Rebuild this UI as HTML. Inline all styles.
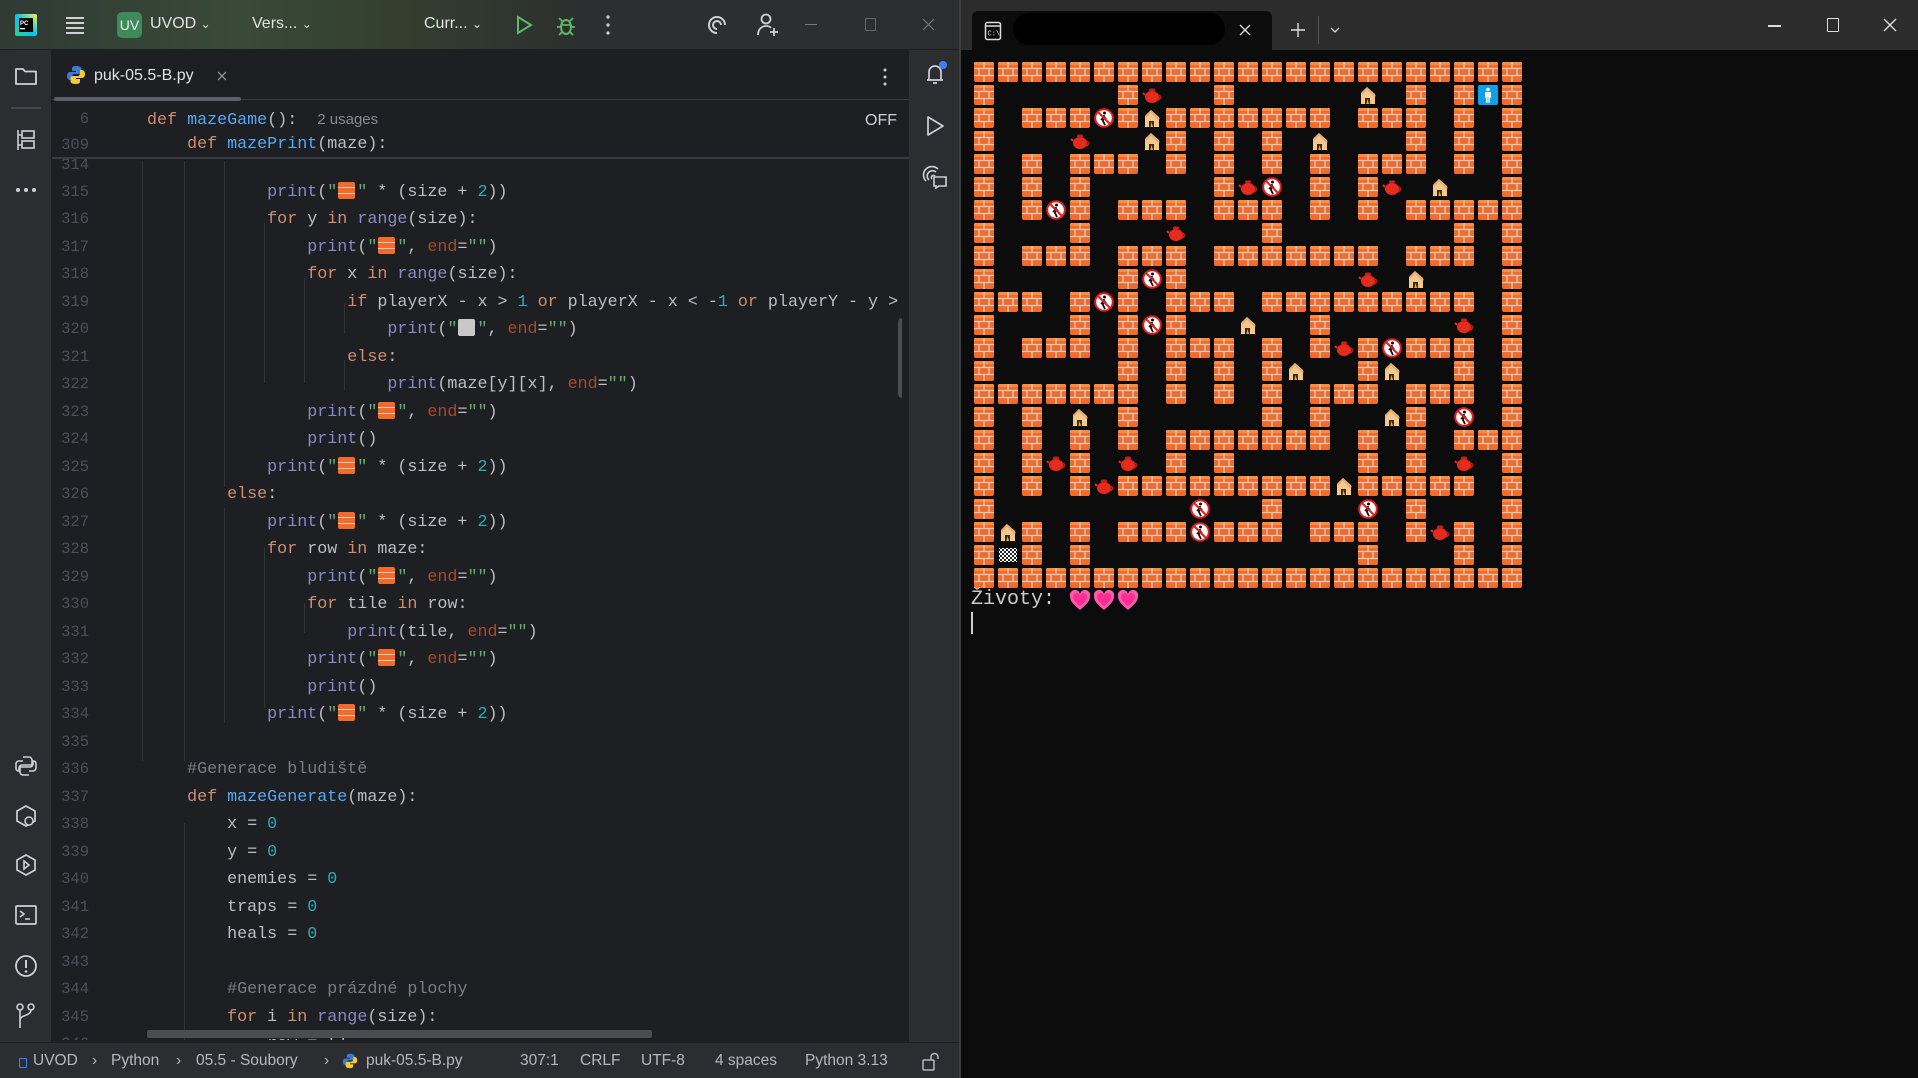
<!DOCTYPE html>
<html><head><meta charset="utf-8">
<style>
*{margin:0;padding:0;box-sizing:border-box}
body{width:1918px;height:1078px;overflow:hidden;background:#0c0c0c;position:relative;font-family:"Liberation Sans",sans-serif}
.abs{position:absolute}
#ide{left:0;top:0;width:960px;height:1078px;background:#1e1f22;overflow:hidden}
#title{left:0;top:0;width:960px;height:50px;background:linear-gradient(90deg,#2f3a33 0%,#3a4a38 25%,#34402f 40%,#2c2f2f 60%,#2b2d30 100%);border-bottom:1px solid #1e1f22}
.tt{color:#dfe1e5;font-size:16px;position:absolute;top:15px}
#lstrip{left:0;top:50px;width:52px;height:992px;background:#2b2d30;border-right:1px solid #1e1f22}
#rstrip{left:909px;top:50px;width:51px;height:992px;background:#2b2d30}
#status{left:0;top:1042px;width:960px;height:36px;background:#2b2d30;border-top:1px solid #1e1f22}
.st{position:absolute;top:9px;color:#b4b8bf;font-size:15.5px}
.code{font-family:"Liberation Mono",monospace;font-size:16.7px;color:#bcbec4;white-space:pre}
.ln{position:absolute;left:52px;width:37px;text-align:right;color:#4b5059;font-family:"Liberation Mono",monospace;font-size:15.5px}
.row{position:absolute;left:147px;height:27.5px;line-height:27.5px}
.k{color:#cf8e6d}.f{color:#56a8f5}.b{color:#8888c6}.n{color:#2aacb8}.s{color:#6aab73}.p{color:#aa4926}.c{color:#7a7e85}
.em{display:inline-block;width:20px;height:17px;vertical-align:-3px;position:relative}
.em i{position:absolute;left:1px;top:0;width:17px;height:17px;border-radius:2px;background:#f26b2a;
background-image:linear-gradient(#f26b2a 0 5px,#d8cfc8 5px 6px,#f26b2a 6px 11px,#d8cfc8 11px 12px,#f26b2a 12px)}
.em.g i{background:#c8c8c8;background-image:none}
.guide{position:absolute;width:1px;background:#313438}
</style></head><body>
<div id="ide" class="abs">
 <div id="title" class="abs">
  <svg class="abs" style="left:14px;top:13px" width="24" height="24" viewBox="0 0 24 24"><defs><linearGradient id="pg" x1="0" y1="1" x2="1" y2="0"><stop offset="0" stop-color="#21d789"/><stop offset=".5" stop-color="#07c3f2"/><stop offset="1" stop-color="#fcf84a"/></linearGradient></defs><rect x="1" y="1" width="22" height="22" fill="url(#pg)" rx="2"/><rect x="5" y="5" width="14" height="14" fill="#000"/><text x="6" y="12" font-size="6" fill="#fff" font-family="Liberation Sans" font-weight="bold">PC</text><rect x="6" y="15" width="5" height="1.3" fill="#fff"/></svg>
  <svg class="abs" style="left:64px;top:14px" width="22" height="22"><path d="M2 4h18M2 9h18M2 14h18M2 19h18" stroke="#ced0d6" stroke-width="2"/></svg>
  <div class="abs" style="left:117px;top:12px;width:25px;height:26px;border-radius:5px;background:#3e8a5a;color:#e8f0e8;font-size:14px;line-height:26px;text-align:center">UV</div>
  <div class="tt" style="left:150px">UVOD <span style="font-size:12px">&#8964;</span></div>
  <div class="tt" style="left:252px">Vers... <span style="font-size:12px">&#8964;</span></div>
  <div class="tt" style="left:424px">Curr... <span style="font-size:12px">&#8964;</span></div>
  <svg class="abs" style="left:513px;top:14px" width="22" height="22"><path d="M5 3l13 8-13 8z" fill="none" stroke="#5fb865" stroke-width="2"/></svg>
  <svg class="abs" style="left:555px;top:13px" width="22" height="24"><ellipse cx="11" cy="14" rx="5" ry="7" fill="none" stroke="#5fb865" stroke-width="2"/><path d="M6 14H2M16 14h4M7 8L4 5M15 8l3-3M7 19l-3 3M15 19l3 3M6 12h10" stroke="#5fb865" stroke-width="1.8"/></svg>
  <svg class="abs" style="left:604px;top:14px" width="8" height="22"><circle cx="4" cy="3" r="1.6" fill="#ced0d6"/><circle cx="4" cy="11" r="1.6" fill="#ced0d6"/><circle cx="4" cy="19" r="1.6" fill="#ced0d6"/></svg>
  <svg class="abs" style="left:705px;top:13px" width="24" height="24"><path d="M12 20a8 8 0 1 1 8-8M12 16a4 4 0 1 1 4-4M12 12" fill="none" stroke="#ced0d6" stroke-width="2"/></svg>
  <svg class="abs" style="left:755px;top:12px" width="26" height="26"><circle cx="11" cy="7" r="4.5" fill="none" stroke="#ced0d6" stroke-width="1.8"/><path d="M3 23c0-6 4-9 8-9 2 0 4 .5 5 2M19 16v8M15 20h8" fill="none" stroke="#ced0d6" stroke-width="1.8"/></svg>
  <div class="abs" style="left:805px;top:24px;width:12px;height:1px;background:#777"></div>
  <div class="abs" style="left:865px;top:18px;width:11px;height:13px;border:1px solid #666"></div>
  <svg class="abs" style="left:922px;top:18px" width="13" height="13"><path d="M1 1l11 11M12 1L1 12" stroke="#777" stroke-width="1.2"/></svg>
 </div>
 <div id="lstrip" class="abs">
  <svg class="abs" style="left:14px;top:16px" width="24" height="20"><path d="M2 3h7l2 2.5h11V18H2z" fill="none" stroke="#ced0d6" stroke-width="1.8" stroke-linejoin="round"/></svg>
  <div class="abs" style="left:11px;top:57px;width:30px;height:2px;background:#43454a"></div>
  <svg class="abs" style="left:15px;top:78px" width="22" height="24"><path d="M3 2v20M3 7h4M3 17h4" stroke="#ced0d6" stroke-width="1.6" fill="none"/><rect x="7" y="3" width="12" height="7" fill="none" stroke="#ced0d6" stroke-width="1.6"/><rect x="7" y="13" width="12" height="7" fill="none" stroke="#ced0d6" stroke-width="1.6"/></svg>
  <svg class="abs" style="left:15px;top:136px" width="24" height="8"><circle cx="3" cy="4" r="2" fill="#ced0d6"/><circle cx="11" cy="4" r="2" fill="#ced0d6"/><circle cx="19" cy="4" r="2" fill="#ced0d6"/></svg>
  <svg class="abs" style="left:14px;top:704px" width="24" height="24"><path d="M9 3h6a3 3 0 0 1 3 3v5H8a3 3 0 0 0-3 3v3H4a3 3 0 0 1-2-3V10a3 3 0 0 1 3-3h4M15 21H9a3 3 0 0 1-3-3v-5h10a3 3 0 0 0 3-3V7h1a3 3 0 0 1 2 3v4a3 3 0 0 1-3 3h-4" fill="none" stroke="#ced0d6" stroke-width="1.6"/></svg>
  <svg class="abs" style="left:14px;top:754px" width="24" height="26"><path d="M12 2l9 5v10l-9 5-9-5V7z" fill="none" stroke="#ced0d6" stroke-width="1.7"/><circle cx="15" cy="17" r="4" fill="#2b2d30" stroke="#ced0d6" stroke-width="1.5"/></svg>
  <svg class="abs" style="left:14px;top:803px" width="24" height="26"><path d="M12 2l9 5v10l-9 5-9-5V7z" fill="none" stroke="#ced0d6" stroke-width="1.7"/><path d="M10 8l5 4-5 4z" fill="none" stroke="#ced0d6" stroke-width="1.6"/></svg>
  <svg class="abs" style="left:14px;top:853px" width="24" height="24"><rect x="2" y="3" width="20" height="18" rx="1" fill="none" stroke="#ced0d6" stroke-width="1.7"/><path d="M6 8l4 3-4 3M11 16h5" fill="none" stroke="#ced0d6" stroke-width="1.6"/></svg>
  <svg class="abs" style="left:13px;top:903px" width="26" height="26"><circle cx="13" cy="13" r="10" fill="none" stroke="#ced0d6" stroke-width="1.8"/><path d="M13 7v8" stroke="#ced0d6" stroke-width="2"/><circle cx="13" cy="18.5" r="1.3" fill="#ced0d6"/></svg>
  <svg class="abs" style="left:14px;top:952px" width="24" height="28"><circle cx="6" cy="5" r="3" fill="none" stroke="#ced0d6" stroke-width="1.6"/><circle cx="17" cy="5" r="3" fill="none" stroke="#ced0d6" stroke-width="1.6"/><path d="M6 8v18M17 8c0 6-11 5-11 10" fill="none" stroke="#ced0d6" stroke-width="1.6"/></svg>
 </div>
 <div id="rstrip" class="abs">
  <svg class="abs" style="left:14px;top:10px" width="26" height="28"><path d="M4 20h16M6 20v-8a6 6 0 0 1 12 0v8M10 23h4" fill="none" stroke="#ced0d6" stroke-width="1.7"/><circle cx="20" cy="5" r="4" fill="#3d82f5"/></svg>
  <svg class="abs" style="left:15px;top:64px" width="22" height="24"><path d="M4 3l15 9-15 9z" fill="none" stroke="#ced0d6" stroke-width="1.7" stroke-linejoin="round"/></svg>
  <svg class="abs" style="left:13px;top:115px" width="26" height="24"><path d="M4 16a8 8 0 0 1 12-12M7 15a5 5 0 0 1 7-8M10 14a2 2 0 0 1 3-3" fill="none" stroke="#ced0d6" stroke-width="1.6"/><path d="M12 12h12v9h-7l-3 2v-2h-2z" fill="#2b2d30" stroke="#ced0d6" stroke-width="1.6"/></svg>
 </div>
 <!-- tab bar -->
 <svg class="abs" style="left:66px;top:65px" width="20" height="20" viewBox="0 0 20 20"><path d="M10 1c-4 0-4 2-4 3v2h4v1H4c-2 0-3 2-3 4s1 4 3 4h2v-3c0-2 1-3 3-3h4c1.5 0 2.5-1 2.5-2.5V4c0-2-2-3-5.5-3z" fill="#3d7ad6"/><path d="M10 19c4 0 4-2 4-3v-2h-4v-1h6c2 0 3-2 3-4s-1-4-3-4h-2v3c0 2-1 3-3 3H7c-1.5 0-2.5 1-2.5 2.5V16c0 2 2 3 5.5 3z" fill="#f5c83a"/></svg>
 <div class="abs" style="left:94px;top:67px;color:#dfe1e5;font-size:16px">puk-05.5-B.py</div>
 <svg class="abs" style="left:217px;top:71px" width="10" height="10"><path d="M1 1l8 8M9 1L1 9" stroke="#8c8f94" stroke-width="1.3"/></svg>
 <svg class="abs" style="left:882px;top:68px" width="6" height="18"><circle cx="3" cy="2" r="1.5" fill="#ced0d6"/><circle cx="3" cy="9" r="1.5" fill="#ced0d6"/><circle cx="3" cy="16" r="1.5" fill="#ced0d6"/></svg>
 <div class="abs" style="left:52px;top:99px;width:857px;height:1px;background:#393b40"></div>
 <div class="abs" style="left:54px;top:97px;width:187px;height:4px;border-radius:2px;background:#5d6067"></div>

 <!-- code -->
 <div class="abs" style="left:52px;top:158px;width:850px;height:882px;overflow:hidden">
  <div style="position:absolute;left:-52px;top:-155.5px;width:960px;height:1100px">
   <div class="guide" style="left:142px;top:158px;height:600px"></div>
   <div class="guide" style="left:184px;top:158px;height:600px"></div>
   <div class="guide" style="left:224px;top:158px;height:326px"></div>
   <div class="guide" style="left:224px;top:505px;height:215px"></div>
   <div class="guide" style="left:264px;top:220px;height:160px"></div>
   <div class="guide" style="left:304px;top:275px;height:105px"></div>
   <div class="guide" style="left:344px;top:300px;height:30px"></div>
   <div class="guide" style="left:344px;top:357px;height:30px"></div>
   <div class="guide" style="left:264px;top:545px;height:160px"></div>
   <div class="guide" style="left:304px;top:600px;height:30px"></div>
   <div class="guide" style="left:184px;top:820px;height:230px"></div>
   <div class="code">
<div class="ln" style="top:149px;line-height:27.5px">314</div>
<div class="ln" style="top:176px;line-height:27.5px">315</div><div class="row" style="top:176px">            <span class="b">print</span>(<span class="s">"<span class="em"><i></i></span>"</span> * (size + <span class="n">2</span>))</div>
<div class="ln" style="top:203.5px;line-height:27.5px">316</div><div class="row" style="top:203.5px">            <span class="k">for</span> y <span class="k">in</span> <span class="b">range</span>(size):</div>
<div class="ln" style="top:231px;line-height:27.5px">317</div><div class="row" style="top:231px">                <span class="b">print</span>(<span class="s">"<span class="em"><i></i></span>"</span>, <span class="p">end</span>=<span class="s">""</span>)</div>
<div class="ln" style="top:258.5px;line-height:27.5px">318</div><div class="row" style="top:258.5px">                <span class="k">for</span> x <span class="k">in</span> <span class="b">range</span>(size):</div>
<div class="ln" style="top:286px;line-height:27.5px">319</div><div class="row" style="top:286px">                    <span class="k">if</span> playerX - x &gt; <span class="n">1</span> <span class="k">or</span> playerX - x &lt; -<span class="n">1</span> <span class="k">or</span> playerY - y &gt; <span class="n">1</span></div>
<div class="ln" style="top:313.5px;line-height:27.5px">320</div><div class="row" style="top:313.5px">                        <span class="b">print</span>(<span class="s">"<span class="em g"><i></i></span>"</span>, <span class="p">end</span>=<span class="s">""</span>)</div>
<div class="ln" style="top:341px;line-height:27.5px">321</div><div class="row" style="top:341px">                    <span class="k">else</span>:</div>
<div class="ln" style="top:368.5px;line-height:27.5px">322</div><div class="row" style="top:368.5px">                        <span class="b">print</span>(maze[y][x], <span class="p">end</span>=<span class="s">""</span>)</div>
<div class="ln" style="top:396px;line-height:27.5px">323</div><div class="row" style="top:396px">                <span class="b">print</span>(<span class="s">"<span class="em"><i></i></span>"</span>, <span class="p">end</span>=<span class="s">""</span>)</div>
<div class="ln" style="top:423.5px;line-height:27.5px">324</div><div class="row" style="top:423.5px">                <span class="b">print</span>()</div>
<div class="ln" style="top:451px;line-height:27.5px">325</div><div class="row" style="top:451px">            <span class="b">print</span>(<span class="s">"<span class="em"><i></i></span>"</span> * (size + <span class="n">2</span>))</div>
<div class="ln" style="top:478.5px;line-height:27.5px">326</div><div class="row" style="top:478.5px">        <span class="k">else</span>:</div>
<div class="ln" style="top:506px;line-height:27.5px">327</div><div class="row" style="top:506px">            <span class="b">print</span>(<span class="s">"<span class="em"><i></i></span>"</span> * (size + <span class="n">2</span>))</div>
<div class="ln" style="top:533.5px;line-height:27.5px">328</div><div class="row" style="top:533.5px">            <span class="k">for</span> row <span class="k">in</span> maze:</div>
<div class="ln" style="top:561px;line-height:27.5px">329</div><div class="row" style="top:561px">                <span class="b">print</span>(<span class="s">"<span class="em"><i></i></span>"</span>, <span class="p">end</span>=<span class="s">""</span>)</div>
<div class="ln" style="top:588.5px;line-height:27.5px">330</div><div class="row" style="top:588.5px">                <span class="k">for</span> tile <span class="k">in</span> row:</div>
<div class="ln" style="top:616px;line-height:27.5px">331</div><div class="row" style="top:616px">                    <span class="b">print</span>(tile, <span class="p">end</span>=<span class="s">""</span>)</div>
<div class="ln" style="top:643.5px;line-height:27.5px">332</div><div class="row" style="top:643.5px">                <span class="b">print</span>(<span class="s">"<span class="em"><i></i></span>"</span>, <span class="p">end</span>=<span class="s">""</span>)</div>
<div class="ln" style="top:671px;line-height:27.5px">333</div><div class="row" style="top:671px">                <span class="b">print</span>()</div>
<div class="ln" style="top:698.5px;line-height:27.5px">334</div><div class="row" style="top:698.5px">            <span class="b">print</span>(<span class="s">"<span class="em"><i></i></span>"</span> * (size + <span class="n">2</span>))</div>
<div class="ln" style="top:726px;line-height:27.5px">335</div>
<div class="ln" style="top:753.5px;line-height:27.5px">336</div><div class="row" style="top:753.5px">    <span class="c">#Generace bludiště</span></div>
<div class="ln" style="top:781px;line-height:27.5px">337</div><div class="row" style="top:781px">    <span class="k">def</span> <span class="f">mazeGenerate</span>(maze):</div>
<div class="ln" style="top:808.5px;line-height:27.5px">338</div><div class="row" style="top:808.5px">        x = <span class="n">0</span></div>
<div class="ln" style="top:836px;line-height:27.5px">339</div><div class="row" style="top:836px">        y = <span class="n">0</span></div>
<div class="ln" style="top:863.5px;line-height:27.5px">340</div><div class="row" style="top:863.5px">        enemies = <span class="n">0</span></div>
<div class="ln" style="top:891px;line-height:27.5px">341</div><div class="row" style="top:891px">        traps = <span class="n">0</span></div>
<div class="ln" style="top:918.5px;line-height:27.5px">342</div><div class="row" style="top:918.5px">        heals = <span class="n">0</span></div>
<div class="ln" style="top:946px;line-height:27.5px">343</div>
<div class="ln" style="top:973.5px;line-height:27.5px">344</div><div class="row" style="top:973.5px">        <span class="c">#Generace prázdné plochy</span></div>
<div class="ln" style="top:1001px;line-height:27.5px">345</div><div class="row" style="top:1001px">        <span class="k">for</span> i <span class="k">in</span> <span class="b">range</span>(size):</div>
<div class="ln" style="top:1028.5px;line-height:27.5px">346</div><div class="row" style="top:1028.5px">            row = []</div>
   </div>
  </div>
  <div class="abs" style="left:846px;top:160px;width:9px;height:80px;border-radius:4px;background:#4a4c50"></div>
  <div class="abs" style="left:95px;top:872px;width:505px;height:8px;border-radius:2px;background:#4a4c50"></div>
 </div>
 <!-- sticky -->
 <div class="abs code" style="left:52px;top:102px;width:857px;height:55px;background:#1e1f22">
  <div class="ln" style="left:0;top:4px;line-height:27px">6</div>
  <div class="row" style="left:95px;top:4px;line-height:27px"><span class="k">def</span> <span class="f">mazeGame</span>():  <span style="font-family:'Liberation Sans',sans-serif;font-size:15px;color:#868a91">2 usages</span></div>
  <div class="ln" style="left:0;top:31px;line-height:24px">309</div>
  <div class="row" style="left:95px;top:31px;line-height:24px;height:24px">    <span class="k">def</span> <span class="f">mazePrint</span>(maze):</div>
  <div class="abs" style="left:813px;top:10px;font-family:'Liberation Sans',sans-serif;font-size:16px;color:#ced0d6">OFF</div>
 </div>
 <div class="abs" style="left:52px;top:157px;width:857px;height:2px;background:#393b40"></div>

 <div id="status" class="abs">
  <div class="abs" style="left:19px;top:15px;width:8px;height:10px;border:1.5px solid #3d82f5;border-radius:1px"></div>
  <div class="st" style="left:33px">UVOD</div>
  <div class="st" style="left:92px">›</div>
  <div class="st" style="left:111px">Python</div>
  <div class="st" style="left:176px">›</div>
  <div class="st" style="left:196px">05.5 - Soubory</div>
  <div class="st" style="left:324px">›</div>
  <svg class="abs" style="left:342px;top:10px" width="16" height="16" viewBox="0 0 20 20"><path d="M10 1c-4 0-4 2-4 3v2h4v1H4c-2 0-3 2-3 4s1 4 3 4h2v-3c0-2 1-3 3-3h4c1.5 0 2.5-1 2.5-2.5V4c0-2-2-3-5.5-3z" fill="#3d7ad6"/><path d="M10 19c4 0 4-2 4-3v-2h-4v-1h6c2 0 3-2 3-4s-1-4-3-4h-2v3c0 2-1 3-3 3H7c-1.5 0-2.5 1-2.5 2.5V16c0 2 2 3 5.5 3z" fill="#f5c83a"/></svg>
  <div class="st" style="left:366px;width:108px;overflow:hidden;white-space:nowrap">puk-05.5-B.py</div>
  <div class="st" style="left:520px">307:1</div>
  <div class="st" style="left:580px">CRLF</div>
  <div class="st" style="left:641px">UTF-8</div>
  <div class="st" style="left:715px">4 spaces</div>
  <div class="st" style="left:805px">Python 3.13</div>
  <svg class="abs" style="left:921px;top:8px" width="18" height="22"><rect x="2" y="9" width="11" height="10" rx="1" fill="none" stroke="#b4b8bf" stroke-width="1.5"/><path d="M10 9V6a3.5 3.5 0 0 1 7 0v2" fill="none" stroke="#b4b8bf" stroke-width="1.5"/></svg>
 </div>
</div>
<div class="abs" style="left:959px;top:0;width:2px;height:1078px;background:#3c3f41"></div>

<!-- terminal -->
<div class="abs" style="left:961px;top:0;width:957px;height:50px;background:#2c2c2c"></div>
<div class="abs" style="left:972px;top:11px;width:300px;height:40px;background:#0c0c0c;border-radius:6px 6px 0 0"></div>
<svg class="abs" style="left:984px;top:21px" width="18" height="20"><rect x="1.5" y="1.5" width="15" height="17" rx="2" fill="none" stroke="#ddd" stroke-width="1.5"/><path d="M1.5 5h15" stroke="#ddd" stroke-width="1.5"/><text x="3.5" y="14.5" font-size="7" fill="#ddd" font-family="Liberation Mono">C:\</text></svg>
<div class="abs" style="left:1013px;top:13px;width:212px;height:32px;background:#000;border-radius:16px"></div>
<svg class="abs" style="left:1239px;top:24px" width="12" height="12"><path d="M1 1l10 10M11 1L1 11" stroke="#ddd" stroke-width="1.3"/></svg>
<svg class="abs" style="left:1291px;top:23px" width="14" height="14"><path d="M7 0v14M0 7h14" stroke="#ddd" stroke-width="1.4"/></svg>
<div class="abs" style="left:1318px;top:16px;width:1px;height:28px;background:#555"></div>
<svg class="abs" style="left:1330px;top:27px" width="10" height="7"><path d="M1 1l4 4 4-4" fill="none" stroke="#ddd" stroke-width="1.3"/></svg>
<div class="abs" style="left:1768px;top:25px;width:13px;height:1.5px;background:#ddd"></div>
<div class="abs" style="left:1827px;top:18px;width:12px;height:14px;border:1.5px solid #ddd;border-radius:1px"></div>
<svg class="abs" style="left:1883px;top:18px" width="14" height="14"><path d="M1 1l12 12M13 1L1 13" stroke="#ddd" stroke-width="1.4"/></svg>

<svg class="abs" style="left:974px;top:62px" width="560" height="530">
<defs>
 <g id="b0"><rect x="0" y="0" width="20" height="20" rx="2" fill="#f26b2a"/><rect x="0" y="0" width="20" height="3" rx="1.5" fill="#ff8c3f"/><path d="M0 6.5h20M0 13.5h20M10 0v6.5M5 6.5v7M15 6.5v7M10 13.5v6.5" stroke="#d6cdc6" stroke-width="1.3"/></g>
 <g id="t0"><ellipse cx="10" cy="12" rx="7" ry="6" fill="#e52b1e"/><rect x="7" y="3.5" width="6" height="3" rx="1.5" fill="#c81e14"/><path d="M16 10c3 0 3 4 0 5" fill="none" stroke="#c81e14" stroke-width="1.6"/><path d="M3 10l-2-2" stroke="#e52b1e" stroke-width="2"/></g>
 <g id="h0"><path d="M3 19V8l6-6 8 7v10z" fill="#f4c98f"/><path d="M3 8l6-6 9 9-2 1-7-7-5 5z" fill="#e8b070"/><path d="M7 19v-6h5v6z" fill="#3a2a1a"/><path d="M8.5 19l1-5 1.5 5z" fill="#ffb400"/></g>
 <g id="x0"><circle cx="10" cy="10" r="8.8" fill="#fff" stroke="#e01e1e" stroke-width="2"/><circle cx="10.5" cy="5" r="1.5" fill="#111"/><path d="M10 7l-1 6 2 4M9 10l-2 2M10 9l2 2" fill="none" stroke="#111" stroke-width="1.8"/><path d="M4 4l12 12" stroke="#e01e1e" stroke-width="2"/></g>
 <g id="p0"><rect x="0" y="0" width="20" height="20" rx="2" fill="#119fe8"/><circle cx="10" cy="4.5" r="1.8" fill="#fff"/><path d="M7 7h6v6h-1v5h-4v-5H7z" fill="#fff"/><path d="M10 12v6" stroke="#119fe8" stroke-width=".8"/></g>
 <pattern id="chk" width="4" height="4" patternUnits="userSpaceOnUse"><rect width="4" height="4" fill="#fff"/><rect width="2" height="2" fill="#222"/><rect x="2" y="2" width="2" height="2" fill="#222"/></pattern>
 <g id="f0"><rect x="1" y="3" width="18" height="14" fill="url(#chk)"/></g>
</defs>
<g transform="translate(0,0)"><use href="#b0" x="0"/><use href="#b0" x="24"/><use href="#b0" x="48"/><use href="#b0" x="72"/><use href="#b0" x="96"/><use href="#b0" x="120"/><use href="#b0" x="144"/><use href="#b0" x="168"/><use href="#b0" x="192"/><use href="#b0" x="216"/><use href="#b0" x="240"/><use href="#b0" x="264"/><use href="#b0" x="288"/><use href="#b0" x="312"/><use href="#b0" x="336"/><use href="#b0" x="360"/><use href="#b0" x="384"/><use href="#b0" x="408"/><use href="#b0" x="432"/><use href="#b0" x="456"/><use href="#b0" x="480"/><use href="#b0" x="504"/><use href="#b0" x="528"/></g>
<g transform="translate(0,23)"><use href="#b0" x="0"/><use href="#b0" x="144"/><use href="#t0" x="168"/><use href="#b0" x="240"/><use href="#h0" x="384"/><use href="#b0" x="432"/><use href="#b0" x="480"/><use href="#p0" x="504"/><use href="#b0" x="528"/></g>
<g transform="translate(0,46)"><use href="#b0" x="0"/><use href="#b0" x="48"/><use href="#b0" x="72"/><use href="#b0" x="96"/><use href="#x0" x="120"/><use href="#b0" x="144"/><use href="#h0" x="168"/><use href="#b0" x="192"/><use href="#b0" x="216"/><use href="#b0" x="240"/><use href="#b0" x="264"/><use href="#b0" x="288"/><use href="#b0" x="312"/><use href="#b0" x="336"/><use href="#b0" x="384"/><use href="#b0" x="408"/><use href="#b0" x="432"/><use href="#b0" x="480"/><use href="#b0" x="528"/></g>
<g transform="translate(0,69)"><use href="#b0" x="0"/><use href="#t0" x="96"/><use href="#h0" x="168"/><use href="#b0" x="192"/><use href="#b0" x="240"/><use href="#b0" x="288"/><use href="#h0" x="336"/><use href="#b0" x="432"/><use href="#b0" x="480"/><use href="#b0" x="528"/></g>
<g transform="translate(0,92)"><use href="#b0" x="0"/><use href="#b0" x="48"/><use href="#b0" x="96"/><use href="#b0" x="120"/><use href="#b0" x="144"/><use href="#b0" x="192"/><use href="#b0" x="240"/><use href="#b0" x="288"/><use href="#b0" x="336"/><use href="#b0" x="384"/><use href="#b0" x="408"/><use href="#b0" x="432"/><use href="#b0" x="480"/><use href="#b0" x="528"/></g>
<g transform="translate(0,115)"><use href="#b0" x="0"/><use href="#b0" x="48"/><use href="#b0" x="96"/><use href="#b0" x="240"/><use href="#t0" x="264"/><use href="#x0" x="288"/><use href="#b0" x="336"/><use href="#b0" x="384"/><use href="#t0" x="408"/><use href="#h0" x="456"/><use href="#b0" x="528"/></g>
<g transform="translate(0,138)"><use href="#b0" x="0"/><use href="#b0" x="48"/><use href="#x0" x="72"/><use href="#b0" x="96"/><use href="#b0" x="144"/><use href="#b0" x="168"/><use href="#b0" x="192"/><use href="#b0" x="240"/><use href="#b0" x="264"/><use href="#b0" x="288"/><use href="#b0" x="336"/><use href="#b0" x="384"/><use href="#b0" x="432"/><use href="#b0" x="456"/><use href="#b0" x="480"/><use href="#b0" x="504"/><use href="#b0" x="528"/></g>
<g transform="translate(0,161)"><use href="#b0" x="0"/><use href="#b0" x="96"/><use href="#t0" x="192"/><use href="#b0" x="288"/><use href="#b0" x="480"/><use href="#b0" x="528"/></g>
<g transform="translate(0,184)"><use href="#b0" x="0"/><use href="#b0" x="48"/><use href="#b0" x="72"/><use href="#b0" x="96"/><use href="#b0" x="144"/><use href="#b0" x="168"/><use href="#b0" x="192"/><use href="#b0" x="240"/><use href="#b0" x="264"/><use href="#b0" x="288"/><use href="#b0" x="312"/><use href="#b0" x="336"/><use href="#b0" x="360"/><use href="#b0" x="384"/><use href="#b0" x="432"/><use href="#b0" x="456"/><use href="#b0" x="480"/><use href="#b0" x="528"/></g>
<g transform="translate(0,207)"><use href="#b0" x="0"/><use href="#b0" x="144"/><use href="#x0" x="168"/><use href="#b0" x="192"/><use href="#t0" x="384"/><use href="#h0" x="432"/><use href="#b0" x="528"/></g>
<g transform="translate(0,230)"><use href="#b0" x="0"/><use href="#b0" x="24"/><use href="#b0" x="48"/><use href="#b0" x="96"/><use href="#x0" x="120"/><use href="#b0" x="144"/><use href="#b0" x="192"/><use href="#b0" x="216"/><use href="#b0" x="240"/><use href="#b0" x="288"/><use href="#b0" x="312"/><use href="#b0" x="336"/><use href="#b0" x="360"/><use href="#b0" x="384"/><use href="#b0" x="408"/><use href="#b0" x="432"/><use href="#b0" x="456"/><use href="#b0" x="480"/><use href="#b0" x="528"/></g>
<g transform="translate(0,253)"><use href="#b0" x="0"/><use href="#b0" x="96"/><use href="#b0" x="144"/><use href="#x0" x="168"/><use href="#b0" x="192"/><use href="#h0" x="264"/><use href="#b0" x="336"/><use href="#t0" x="480"/><use href="#b0" x="528"/></g>
<g transform="translate(0,276)"><use href="#b0" x="0"/><use href="#b0" x="48"/><use href="#b0" x="72"/><use href="#b0" x="96"/><use href="#b0" x="144"/><use href="#b0" x="192"/><use href="#b0" x="216"/><use href="#b0" x="240"/><use href="#b0" x="288"/><use href="#b0" x="336"/><use href="#t0" x="360"/><use href="#b0" x="384"/><use href="#x0" x="408"/><use href="#b0" x="432"/><use href="#b0" x="456"/><use href="#b0" x="480"/><use href="#b0" x="528"/></g>
<g transform="translate(0,299)"><use href="#b0" x="0"/><use href="#b0" x="144"/><use href="#b0" x="192"/><use href="#b0" x="240"/><use href="#b0" x="288"/><use href="#h0" x="312"/><use href="#b0" x="384"/><use href="#h0" x="408"/><use href="#b0" x="480"/><use href="#b0" x="528"/></g>
<g transform="translate(0,322)"><use href="#b0" x="0"/><use href="#b0" x="24"/><use href="#b0" x="48"/><use href="#b0" x="72"/><use href="#b0" x="96"/><use href="#b0" x="120"/><use href="#b0" x="144"/><use href="#b0" x="192"/><use href="#b0" x="240"/><use href="#b0" x="288"/><use href="#b0" x="336"/><use href="#b0" x="360"/><use href="#b0" x="384"/><use href="#b0" x="432"/><use href="#b0" x="456"/><use href="#b0" x="480"/><use href="#b0" x="528"/></g>
<g transform="translate(0,345)"><use href="#b0" x="0"/><use href="#b0" x="48"/><use href="#h0" x="96"/><use href="#b0" x="144"/><use href="#b0" x="288"/><use href="#b0" x="336"/><use href="#h0" x="408"/><use href="#b0" x="432"/><use href="#x0" x="480"/><use href="#b0" x="528"/></g>
<g transform="translate(0,368)"><use href="#b0" x="0"/><use href="#b0" x="48"/><use href="#b0" x="96"/><use href="#b0" x="144"/><use href="#b0" x="192"/><use href="#b0" x="216"/><use href="#b0" x="240"/><use href="#b0" x="264"/><use href="#b0" x="288"/><use href="#b0" x="312"/><use href="#b0" x="336"/><use href="#b0" x="384"/><use href="#b0" x="432"/><use href="#b0" x="480"/><use href="#b0" x="504"/><use href="#b0" x="528"/></g>
<g transform="translate(0,391)"><use href="#b0" x="0"/><use href="#b0" x="48"/><use href="#t0" x="72"/><use href="#b0" x="96"/><use href="#t0" x="144"/><use href="#b0" x="192"/><use href="#b0" x="240"/><use href="#b0" x="384"/><use href="#b0" x="432"/><use href="#t0" x="480"/><use href="#b0" x="528"/></g>
<g transform="translate(0,414)"><use href="#b0" x="0"/><use href="#b0" x="48"/><use href="#b0" x="96"/><use href="#t0" x="120"/><use href="#b0" x="144"/><use href="#b0" x="168"/><use href="#b0" x="192"/><use href="#b0" x="216"/><use href="#b0" x="240"/><use href="#b0" x="264"/><use href="#b0" x="288"/><use href="#b0" x="312"/><use href="#b0" x="336"/><use href="#h0" x="360"/><use href="#b0" x="384"/><use href="#b0" x="408"/><use href="#b0" x="432"/><use href="#b0" x="456"/><use href="#b0" x="480"/><use href="#b0" x="528"/></g>
<g transform="translate(0,437)"><use href="#b0" x="0"/><use href="#x0" x="216"/><use href="#b0" x="288"/><use href="#x0" x="384"/><use href="#b0" x="432"/><use href="#b0" x="528"/></g>
<g transform="translate(0,460)"><use href="#b0" x="0"/><use href="#h0" x="24"/><use href="#b0" x="48"/><use href="#b0" x="96"/><use href="#b0" x="144"/><use href="#b0" x="168"/><use href="#b0" x="192"/><use href="#x0" x="216"/><use href="#b0" x="240"/><use href="#b0" x="264"/><use href="#b0" x="288"/><use href="#b0" x="336"/><use href="#b0" x="360"/><use href="#b0" x="384"/><use href="#b0" x="432"/><use href="#t0" x="456"/><use href="#b0" x="480"/><use href="#b0" x="528"/></g>
<g transform="translate(0,483)"><use href="#b0" x="0"/><use href="#f0" x="24"/><use href="#b0" x="48"/><use href="#b0" x="96"/><use href="#b0" x="384"/><use href="#b0" x="480"/><use href="#b0" x="528"/></g>
<g transform="translate(0,506)"><use href="#b0" x="0"/><use href="#b0" x="24"/><use href="#b0" x="48"/><use href="#b0" x="72"/><use href="#b0" x="96"/><use href="#b0" x="120"/><use href="#b0" x="144"/><use href="#b0" x="168"/><use href="#b0" x="192"/><use href="#b0" x="216"/><use href="#b0" x="240"/><use href="#b0" x="264"/><use href="#b0" x="288"/><use href="#b0" x="312"/><use href="#b0" x="336"/><use href="#b0" x="360"/><use href="#b0" x="384"/><use href="#b0" x="408"/><use href="#b0" x="432"/><use href="#b0" x="456"/><use href="#b0" x="480"/><use href="#b0" x="504"/><use href="#b0" x="528"/></g>
</svg>

<div class="abs" style="left:971px;top:588px;font-family:'Liberation Mono',monospace;font-size:20px;color:#cccccc;white-space:pre">Životy: </div>
<svg class="abs" style="left:1069px;top:590px" width="72" height="22">
 <defs><g id="hr"><path d="M10 20C3 14 0 11 0 6a5 5 0 0 1 10-2 5 5 0 0 1 10 2c0 5-3 8-10 14z" fill="#ff5ab0"/><path d="M10 16C5 12 3 10 3 7a3 3 0 0 1 7-1 3 3 0 0 1 7 1c0 3-2 5-7 9z" fill="#ff2e8e"/></g></defs>
 <use href="#hr" x="1"/><use href="#hr" x="25"/><use href="#hr" x="49"/>
</svg>
<div class="abs" style="left:971px;top:612px;width:1.5px;height:22px;background:#ccc"></div>
</body></html>
